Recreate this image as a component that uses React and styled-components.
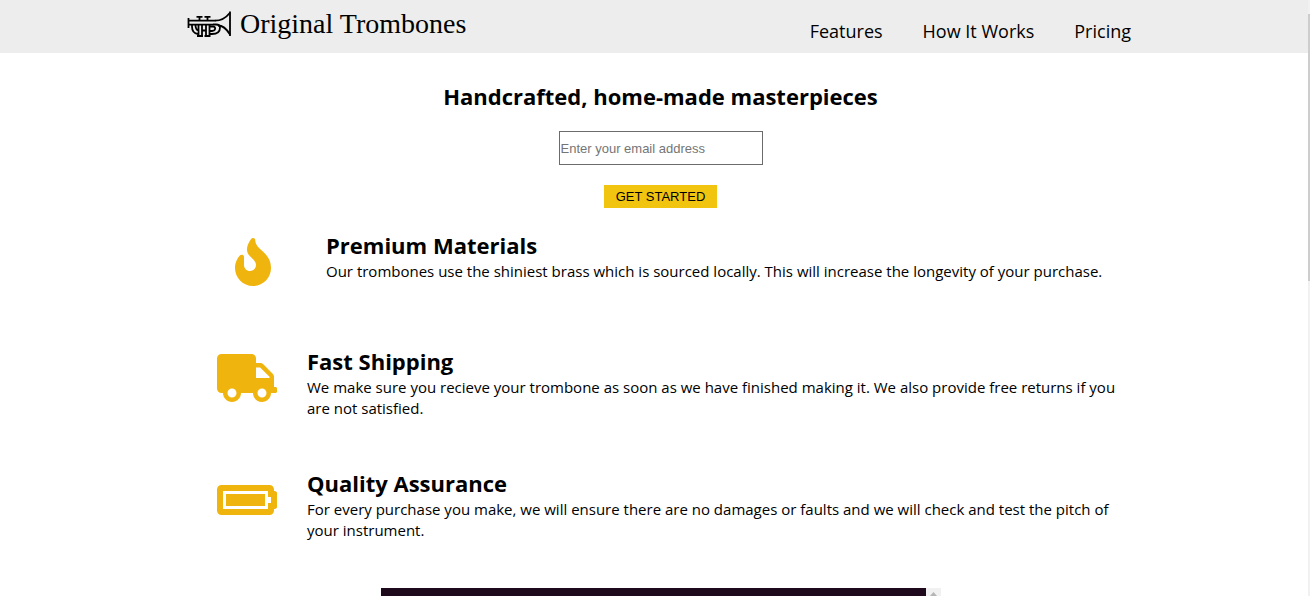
import React from "react";
import styled, { createGlobalStyle } from "styled-components";
import { FaFire, FaTruck, FaBatteryFull } from "react-icons/fa";

const GlobalStyle = createGlobalStyle`
  * { box-sizing: border-box; margin: 0; padding: 0; }
  body {
    background: #fff;
    color: #000;
    font-family: "Segoe UI", "Open Sans", "Noto Sans", sans-serif;
    font-size: 15px;
    line-height: 21px;
  }
`;

const Page = styled.div`
  height: 100vh;
  overflow: hidden;
`;

const Header = styled.header`
  background: #ededed;
`;

const Container = styled.div`
  width: 100%;
  max-width: 958px;
  margin: 0 auto;
  padding-left: 11px;
`;

const HeaderRow = styled(Container)`
  display: flex;
  justify-content: space-between;
  height: 53px;
  padding-right: 3px;
`;

const Logo = styled.a`
  display: flex;
  align-items: center;
  gap: 8px;
  height: 48px;
  color: #000;
  text-decoration: none;
  font: 28px/32px "Liberation Serif", serif;
  svg { width: 45px; height: 28px; }
`;

const Nav = styled.nav`
  display: flex;
  align-items: flex-end;
  gap: 40px;
  padding-bottom: 10px;
`;

const NavLink = styled.a`
  color: #000;
  font-size: 18px;
  line-height: 24px;
  text-decoration: none;
`;

const Hero = styled.form`
  display: flex;
  flex-direction: column;
  align-items: center;
  padding: 28px 0 22px;
`;

const Title = styled.h2`
  font-size: 22px;
  line-height: 30px;
  padding-bottom: 1px;
`;

const EmailInput = styled.input`
  width: 204px;
  height: 34px;
  margin: 19px 0 20px;
  padding: 1px;
  border: 1px solid #6b6b6b;
  font: 13px "Liberation Sans", sans-serif;
  &::placeholder { color: #757575; }
`;

const Button = styled.button`
  width: 113px;
  height: 23px;
  border: 0;
  background: #f1c40f;
  color: #000;
  font: 13px "Liberation Sans", sans-serif;
`;

const FeatureList = styled.section`
  display: flex;
  flex-direction: column;
  gap: 49px;
`;

const Feature = styled.article`
  display: flex;
  min-height: 67px;
`;

const FeatureIcon = styled.div`
  flex: none;
  display: flex;
  justify-content: center;
  width: ${(p) => (p.$wide ? "139px" : "120px")};
  padding: 8px ${(p) => (p.$wide ? "7px" : "0")} 0 0;
  color: #f0b40f;
  svg { width: ${(p) => p.$size}; height: 48px; }
`;

const Video = styled.div`
  display: flex;
  justify-content: flex-end;
  width: 560px;
  height: 315px;
  margin: 47px auto 0;
  background: #1e0a1c;
`;

const VideoScroll = styled.div`
  width: 15px;
  background: #f1f1f1;
  svg { display: block; margin: 4px auto; }
`;

const ScrollTrack = styled.div`
  position: fixed;
  top: 0;
  right: 0;
  bottom: 0;
  width: 2px;
  padding-top: 14px;
  background: #f1f1f1;
`;

const ScrollThumb = styled.div`
  height: 267px;
  background: #cdcdcd;
`;

function Trumpet() {
  return (
    <svg viewBox="0 0 45 28" fill="none" stroke="#000" strokeWidth="1.8" aria-hidden="true">
      <path d="M1.5 8v10M1.5 10.7h27M1.5 14.6h24.5M43 1.5v24.5" />
      <path d="M28 10.7c6 0 11-3 15-8M31 15.5c5 0 9 4 12 9" />
      <path d="M9.5 6.8h6M17.5 6.8h6M12.5 7v3M20.5 7v3" />
      <path d="M5 14.5v2c0 4 2 7 6 7.5M23 24h2c5 0 8-2.500 8-6.500 0-2-2-3-4-3h-3" />
      <path d="M11.500 14.500V26M15 14.500V26M19 14.500V26M22.500 14.500V26M10 26h6M17.500 26h6M8.500 15c0 3 1 5 3 5.500M15 20.500h4M23 21h2c4 0 4-4.500 1-4.500h-3" />
    </svg>
  );
}

const features = [
  {
    title: "Premium Materials",
    text: "Our trombones use the shiniest brass which is sourced locally. This will increase the longevity of your purchase.",
    icon: <FaFire />,
    size: "36px",
    wide: true,
  },
  {
    title: "Fast Shipping",
    text: "We make sure you recieve your trombone as soon as we have finished making it. We also provide free returns if you are not satisfied.",
    icon: <FaTruck />,
    size: "60px",
  },
  {
    title: "Quality Assurance",
    text: "For every purchase you make, we will ensure there are no damages or faults and we will check and test the pitch of your instrument.",
    icon: <FaBatteryFull />,
    size: "60px",
  },
];

export default function App() {
  return (
    <Page>
      <GlobalStyle />
      <Header>
        <HeaderRow>
          <Logo href="#">
            <Trumpet />
            Original Trombones
          </Logo>
          <Nav>
            <NavLink href="#features">Features</NavLink>
            <NavLink href="#how">How It Works</NavLink>
            <NavLink href="#pricing">Pricing</NavLink>
          </Nav>
        </HeaderRow>
      </Header>
      <Container as="main">
        <Hero>
          <Title>Handcrafted, home-made masterpieces</Title>
          <EmailInput type="email" aria-label="Email address" placeholder="Enter your email address" />
          <Button type="button">GET STARTED</Button>
        </Hero>
        <FeatureList id="features">
          {features.map((f) => (
            <Feature key={f.title}>
              <FeatureIcon $size={f.size} $wide={f.wide}>{f.icon}</FeatureIcon>
              <div>
                <Title>{f.title}</Title>
                <p>{f.text}</p>
              </div>
            </Feature>
          ))}
        </FeatureList>
        <Video id="how">
          <VideoScroll>
            <svg width="7" height="4" viewBox="0 0 7 4" fill="#b5b5b5" aria-hidden="true">
              <path d="M0 4L3.5 0L7 4z" />
            </svg>
          </VideoScroll>
        </Video>
      </Container>
      <ScrollTrack>
        <ScrollThumb />
      </ScrollTrack>
    </Page>
  );
}
